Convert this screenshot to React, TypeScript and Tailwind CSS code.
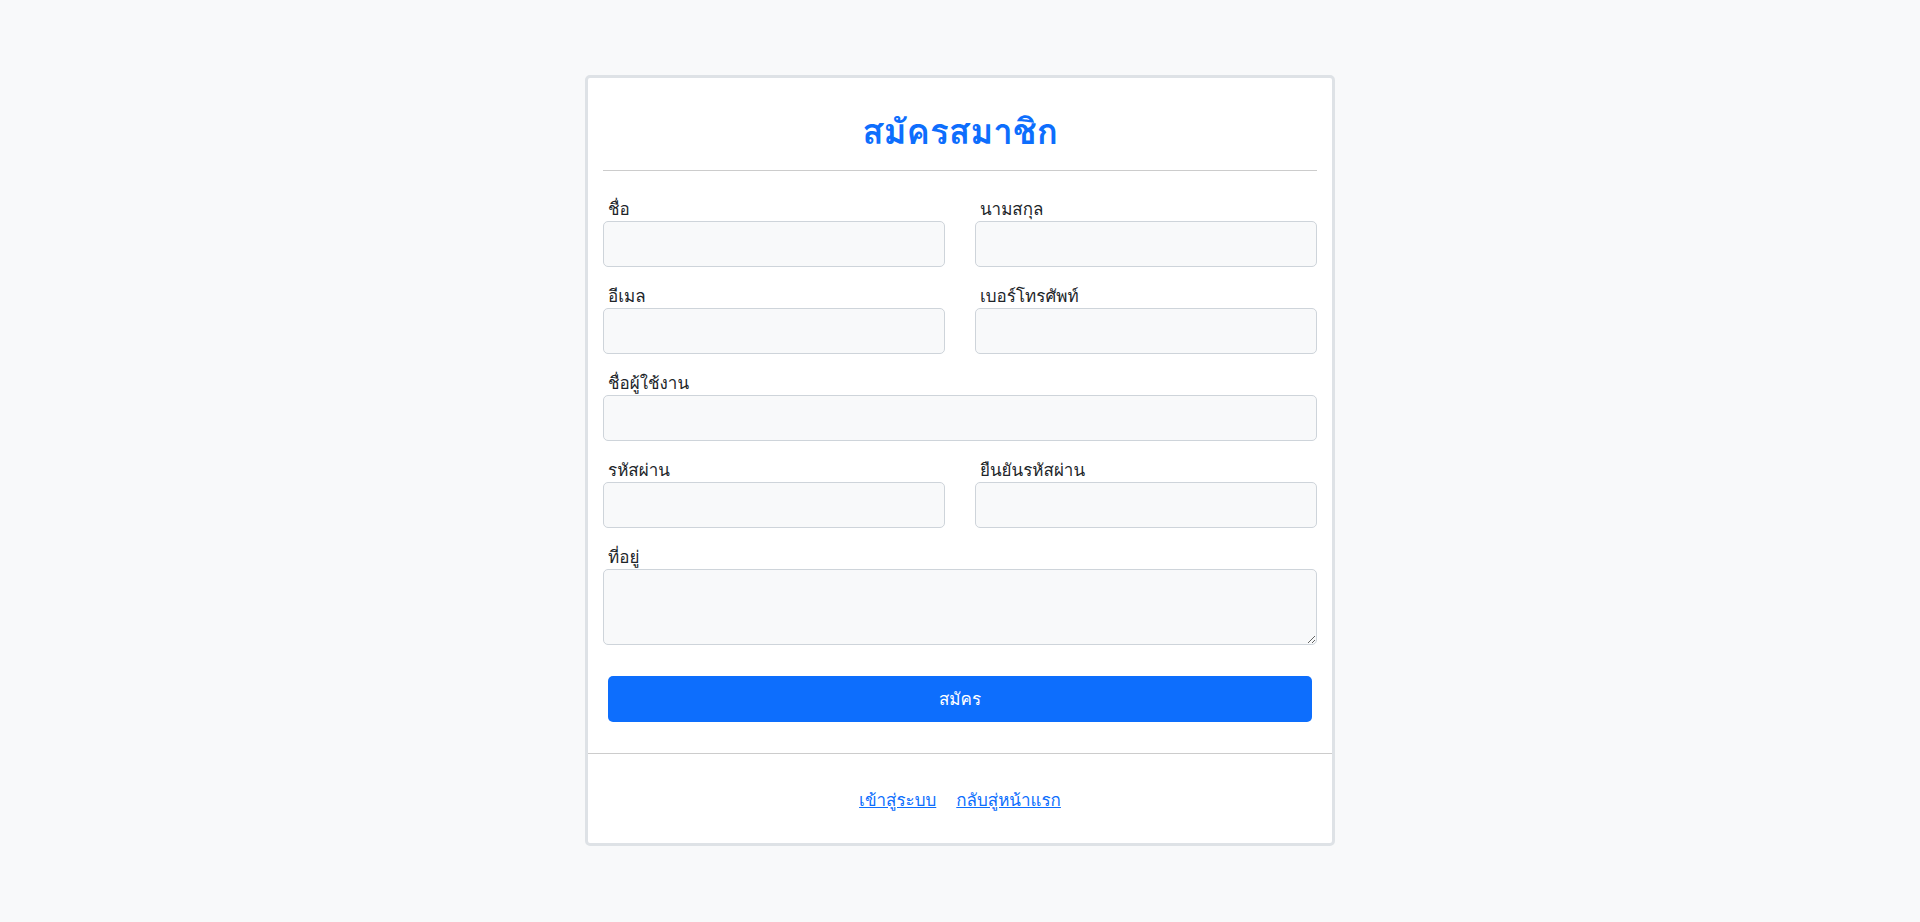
import React from 'react';

function Field({ label, area }: { label: string; area?: boolean }) {
  return (
    <div className="flex flex-col">
      <label className="block pl-[5px] text-[17px] leading-[24px] text-[#212529]">{label}</label>
      {area ? (
        <textarea className="h-[76px] w-full rounded-[5px] border border-[#ced4da] bg-[#f8f9fa] px-3 py-2 outline-none" />
      ) : (
        <input className="h-[46px] w-full rounded-[5px] border border-[#ced4da] bg-[#f8f9fa] px-3 outline-none" />
      )}
    </div>
  );
}

export default function App() {
  return (
    <div className="min-h-[922px] bg-[#f8f9fa] pt-[75px] font-['Loma','DejaVu_Sans',sans-serif]">
      <div className="mx-auto w-[750px] rounded-[5px] border-[3px] border-[#dee2e6] bg-white">
        {/* ฟอร์ม */}
        <div className="px-[15px]">
          <h2 className="pt-[34px] pb-[18px] text-center text-[35px] font-bold leading-[40px] text-[#0d6efd]">
            สมัครสมาชิก
          </h2>
          <div className="border-t border-[#cccccc]" />

          <div className="mt-[26px] flex flex-col gap-[17px]">
            <div className="grid grid-cols-2 gap-x-[30px]">
              <Field label="ชื่อ" />
              <Field label="นามสกุล" />
            </div>
            <div className="grid grid-cols-2 gap-x-[30px]">
              <Field label="อีเมล" />
              <Field label="เบอร์โทรศัพท์" />
            </div>
            <Field label="ชื่อผู้ใช้งาน" />
            <div className="grid grid-cols-2 gap-x-[30px]">
              <Field label="รหัสผ่าน" />
              <Field label="ยืนยันรหัสผ่าน" />
            </div>
            <Field label="ที่อยู่" area />
          </div>

          <div className="px-[5px] pt-[31px] pb-[31px]">
            <button className="h-[46px] w-full rounded-[5px] bg-[#0d6efd] text-[17px] text-white">สมัคร</button>
          </div>
        </div>

        <div className="flex justify-center gap-[20px] border-t border-[#cccccc] pt-[34px] pb-[31px] text-[17px] leading-6">
          <a href="#" className="text-[#0d6efd] underline">เข้าสู่ระบบ</a>
          <a href="#" className="text-[#0d6efd] underline">กลับสู่หน้าแรก</a>
        </div>
      </div>
    </div>
  );
}
